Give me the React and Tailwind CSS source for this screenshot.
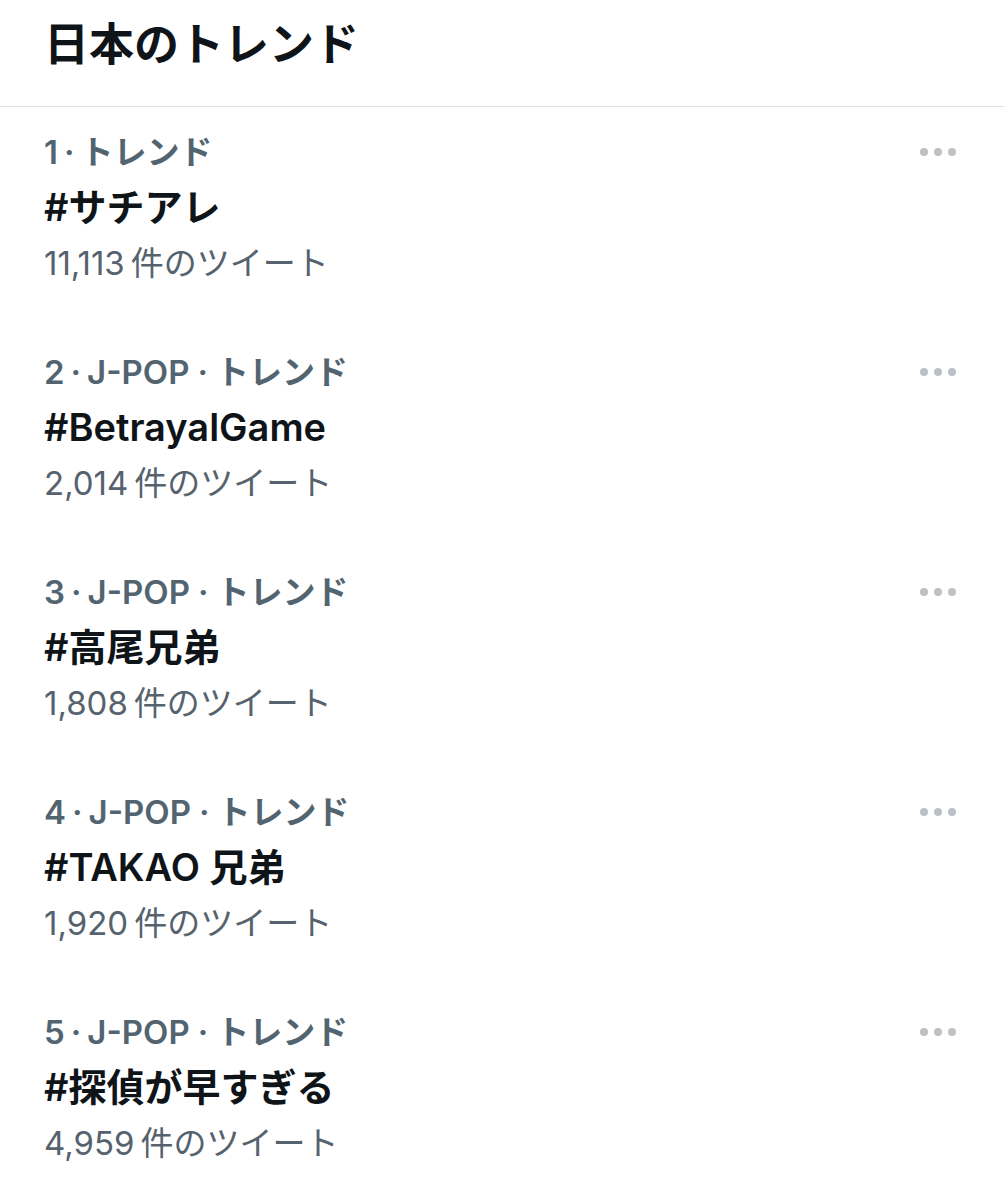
import React from "react";

const trends = [
  { rank: 1, cat: null, title: "#サチアレ", count: "11,113" },
  { rank: 2, cat: "J-POP", title: "#BetrayalGame", count: "2,014" },
  { rank: 3, cat: "J-POP", title: "#高尾兄弟", count: "1,808" },
  { rank: 4, cat: "J-POP", title: "#TAKAO 兄弟", count: "1,920" },
  { rank: 5, cat: "J-POP", title: "#探偵が早すぎる", count: "4,959" },
];

const font = { fontFamily: "Inter, 'Noto Sans CJK JP', sans-serif" };

function Dots() {
  return (
    <div className="flex h-[44px] items-center gap-[6px]">
      <span className="h-[8px] w-[8px] rounded-full bg-[#bcc1c5]" />
      <span className="h-[8px] w-[8px] rounded-full bg-[#bcc1c5]" />
      <span className="h-[8px] w-[8px] rounded-full bg-[#bcc1c5]" />
    </div>
  );
}

export default function App() {
  return (
    <div className="min-h-[1199px] w-[1004px] bg-white" style={font}>
      <div className="h-[107px] border-b border-[#dfe2e5] pl-[44px]">
        <h1 className="text-[45px] font-bold leading-[90px] text-[#0f1419]">日本のトレンド</h1>
      </div>
      {trends.map((t) => (
        <div key={t.rank} className="flex justify-between pl-[44px] pr-[48px] pt-[23px] pb-[41px]">
          <div className="flex flex-col">
            <div className="text-[33px] font-semibold leading-[44px] text-[#536471] whitespace-nowrap">
              {t.rank}
              <span className="mx-[6px]">·</span>
              {t.cat ? (
                <>
                  {t.cat}
                  <span className="mx-[8px]">·</span>
                </>
              ) : null}
              トレンド
            </div>
            <div className="text-[38px] font-semibold leading-[66px] text-[#0f1419] whitespace-nowrap">{t.title}</div>
            <div className="text-[33px] font-normal leading-[46px] text-[#56626d] whitespace-nowrap">
              {t.count}
              <span className="ml-[6px]">件のツイート</span>
            </div>
          </div>
          <Dots />
        </div>
      ))}
    </div>
  );
}
